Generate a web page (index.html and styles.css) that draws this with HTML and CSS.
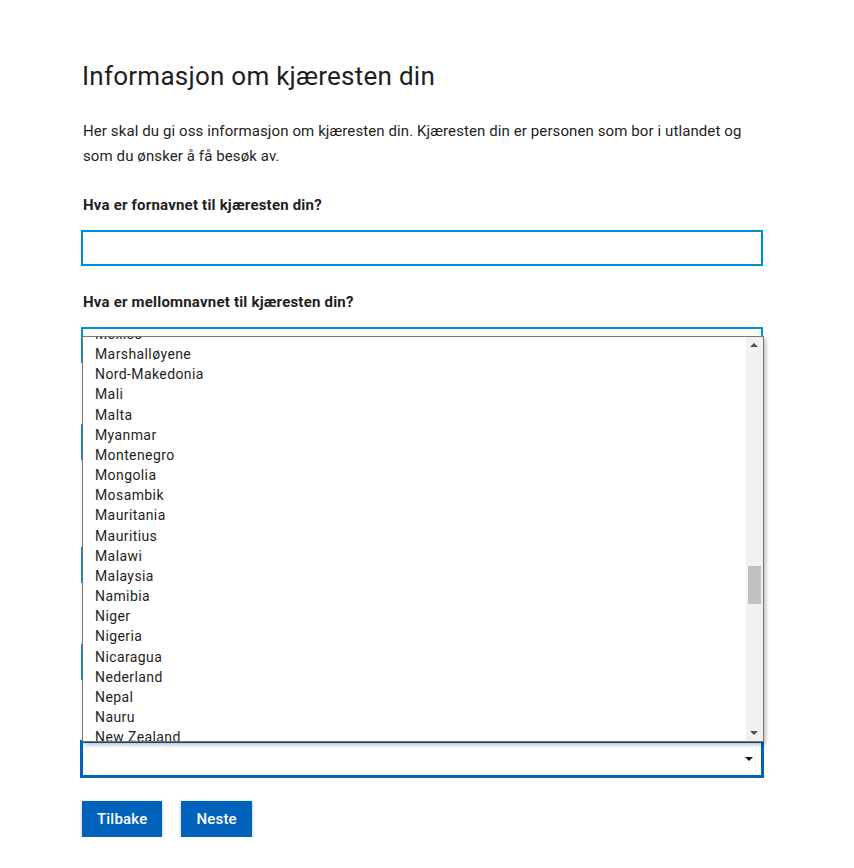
FILE: index.html
```html
<!DOCTYPE html>
<html lang="no">
<head>
    <meta charset="UTF-8">
    <meta name="viewport" content="width=device-width, initial-scale=1.0">
    <title>Informasjon om kjæresten din</title>
    <link rel="stylesheet" href="styles.css">
</head>
<body>

<div class="page">
    <h1>Informasjon om kjæresten din</h1>
    <p class="intro">Her skal du gi oss informasjon om kjæresten din. Kjæresten din er personen som bor i utlandet og som du ønsker å få besøk av.</p>

    <form class="form">
        <div class="field">
            <label for="fornavn">Hva er fornavnet til kjæresten din?</label>
            <input type="text" id="fornavn">
        </div>
        <div class="field">
            <label for="mellomnavn">Hva er mellomnavnet til kjæresten din?</label>
            <input type="text" id="mellomnavn">
        </div>
        <div class="field">
            <label for="etternavn">Hva er etternavnet til kjæresten din?</label>
            <input type="text" id="etternavn">
        </div>
        <div class="field">
            <label for="fodt">Når er kjæresten din født?</label>
            <span class="hint">Skriv på formen dd.mm.åååå</span>
            <input type="text" id="fodt">
        </div>
        <div class="field">
            <label for="by">Hvilken by bor kjæresten din i?</label>
            <input type="text" id="by">
        </div>
        <div class="field">
            <label for="land">Hvilket land bor kjæresten din i?</label>
            <div class="select focused">
                <span class="arrow"></span>
            </div>
        </div>

        <div class="buttons">
            <button type="button">Tilbake</button>
            <button type="button">Neste</button>
        </div>
    </form>

    <div class="dropdown">
        <ul class="options">
            <li class="cut">Mexico</li>
            <li>Marshalløyene</li>
            <li>Nord-Makedonia</li>
            <li>Mali</li>
            <li>Malta</li>
            <li>Myanmar</li>
            <li>Montenegro</li>
            <li>Mongolia</li>
            <li>Mosambik</li>
            <li>Mauritania</li>
            <li>Mauritius</li>
            <li>Malawi</li>
            <li>Malaysia</li>
            <li>Namibia</li>
            <li>Niger</li>
            <li>Nigeria</li>
            <li>Nicaragua</li>
            <li>Nederland</li>
            <li>Nepal</li>
            <li>Nauru</li>
            <li>New Zealand</li>
            <li>Oman</li>
        </ul>
        <div class="scrollbar">
            <span class="up"></span>
            <span class="track"><span class="thumb"></span></span>
            <span class="down"></span>
        </div>
    </div>
</div>

</body>
</html>
```

FILE: styles.css
```css
body {
    font-family: Roboto, "Noto Sans", Arial, sans-serif;
    margin: 0;
    padding: 0;
    background-color: #fff;
    color: #1e1e1e;
}
.page {
    position: relative;
    width: 682px;
    margin-left: 81px;
    padding-top: 60px;
}
h1 {
    font-size: 26px;
    font-weight: 400;
    line-height: 32px;
    margin: 0 0 0 1px;
    letter-spacing: 0.25px;
}
.intro {
    font-size: 15px;
    line-height: 25px;
    letter-spacing: 0.1px;
    margin: 27px 0 0 2px;
}
.form {
    margin-top: 26px;
}
.field {
    display: flex;
    flex-direction: column;
    margin-bottom: 26px;
}
.field label {
    font-size: 15px;
    font-weight: 700;
    line-height: 20px;
    letter-spacing: 0.2px;
    margin: 0 0 15px 2px;
}
.hint {
    font-size: 14px;
    line-height: 20px;
    margin: -9px 0 15px 2px;
}
.field input, .select {
    box-sizing: border-box;
    height: 36px;
    width: 100%;
    border: 2px solid #0090d5;
    border-radius: 0;
    margin: 0;
    font-size: 15px;
}
.select {
    position: relative;
}
.select.focused {
    border-color: #0062ba;
    box-shadow: 0 0 0 1px #0062ba;
}
.arrow {
    position: absolute;
    right: 8px;
    top: 14px;
    border-left: 4px solid transparent;
    border-right: 4px solid transparent;
    border-top: 4px solid #111;
}
.buttons {
    display: flex;
    gap: 19px;
    margin-top: -2px;
}
.buttons button {
    height: 36px;
    padding: 0 15px;
    background-color: #0062ba;
    color: #fff;
    border: none;
    font-family: inherit;
    font-size: 15px;
    font-weight: 500;
    letter-spacing: 0.2px;
    box-shadow: 0 1px 3px rgba(0, 0, 0, 0.3);
    cursor: pointer;
}
.buttons button:first-child {
    margin-left: 1px;
}

/* open native-style list of the country select */
.dropdown {
    position: absolute;
    left: 1px;
    top: 336px;
    width: 682px;
    height: 406px;
    box-sizing: border-box;
    border: 1px solid #767676;
    background-color: #fff;
    box-shadow: 2px 3px 4px rgba(0, 0, 0, 0.25);
    display: flex;
    overflow: hidden;
}
.options {
    flex: 1;
    list-style: none;
    margin: 0;
    padding: 0;
    overflow: hidden;
}
.options li {
    font-size: 14px;
    line-height: 20.15px;
    letter-spacing: 0.4px;
    padding-left: 12px;
    color: #1e1e1e;
    white-space: nowrap;
}
.options .cut {
    margin-top: -13px;
}
.scrollbar {
    width: 17px;
    background-color: #f1f1f1;
    display: flex;
    flex-direction: column;
    align-items: center;
}
.scrollbar .up, .scrollbar .down {
    height: 17px;
    width: 17px;
    position: relative;
}
.scrollbar .up::after, .scrollbar .down::after {
    content: "";
    position: absolute;
    left: 4px;
    border-left: 4px solid transparent;
    border-right: 4px solid transparent;
}
.scrollbar .up::after {
    top: 6px;
    border-bottom: 4px solid #505050;
}
.scrollbar .down::after {
    top: 7px;
    border-top: 4px solid #505050;
}
.track {
    flex: 1;
    width: 100%;
    display: flex;
    justify-content: center;
    padding-top: 212px;
}
.thumb {
    width: 13px;
    height: 38px;
    background-color: #c1c1c1;
}
```
